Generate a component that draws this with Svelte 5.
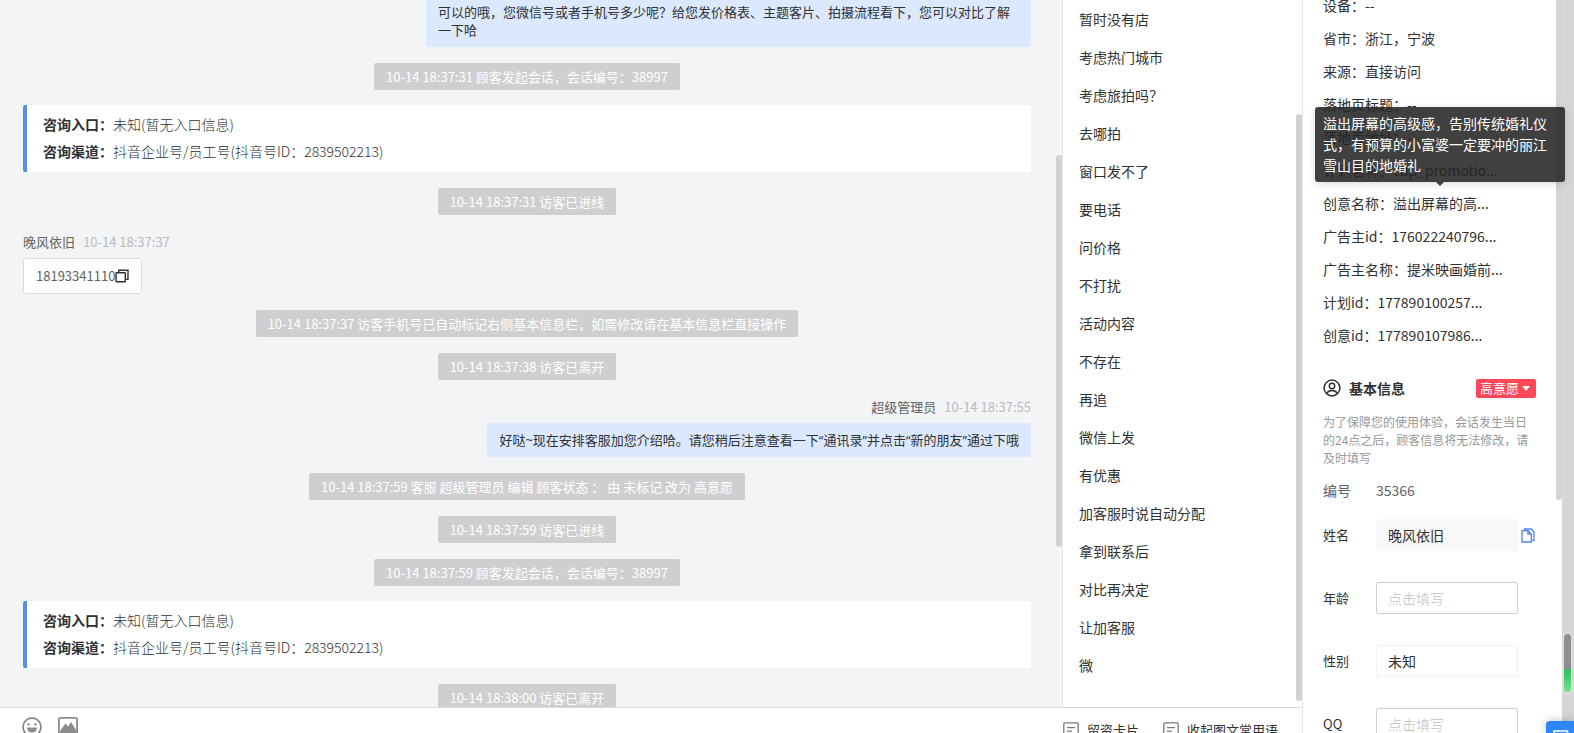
<script>
  const messages = [
    { kind: 'mine', text: '可以的哦，您微信号或者手机号多少呢？给您发价格表、主题客片、拍摄流程看下，您可以对比了解一下哈' },
    { kind: 'notice', text: '10-14 18:37:31 顾客发起会话，会话编号：38997' },
    { kind: 'card' },
    { kind: 'notice', text: '10-14 18:37:31 访客已进线' },
    { kind: 'guest', name: '晚风依旧', time: '10-14 18:37:37', text: '18193341110' },
    { kind: 'notice', text: '10-14 18:37:37 访客手机号已自动标记右侧基本信息栏，如需修改请在基本信息栏直接操作' },
    { kind: 'notice', text: '10-14 18:37:38 访客已离开' },
    { kind: 'mine', name: '超级管理员', time: '10-14 18:37:55', text: '好哒~现在安排客服加您介绍哈。请您稍后注意查看一下“通讯录”并点击“新的朋友”通过下哦' },
    { kind: 'notice', text: '10-14 18:37:59 客服 超级管理员 编辑 顾客状态 ： 由 未标记 改为 高意愿' },
    { kind: 'notice', text: '10-14 18:37:59 访客已进线' },
    { kind: 'notice', text: '10-14 18:37:59 顾客发起会话，会话编号：38997' },
    { kind: 'card' },
    { kind: 'notice', text: '10-14 18:38:00 访客已离开' }
  ];
  const phrases = ['暂时没有店', '考虑热门城市', '考虑旅拍吗？', '去哪拍', '窗口发不了', '要电话', '问价格', '不打扰', '活动内容', '不存在', '再追', '微信上发', '有优惠', '加客服时说自动分配', '拿到联系后', '对比再决定', '让加客服', '微'];
  const details = [
    ['设备', '--'],
    ['省市', '浙江，宁波'],
    ['来源', '直接访问'],
    ['落地页标题', '--'],
    ['落地页地址', '--'],
    ['计划名称', 'cdp_promotio...'],
    ['创意名称', '溢出屏幕的高...', '溢出屏幕的高级感，告别传统婚礼仪式，有预算的小富婆一定要冲的丽江雪山目的地婚礼'],
    ['广告主id', '176022240796...'],
    ['广告主名称', '提米映画婚前...'],
    ['计划id', '177890100257...'],
    ['创意id', '177890107986...']
  ];
  const fields = [
    { id: 'name', label: '姓名', value: '晚风依旧', look: 'filled', copy: true },
    { id: 'age', label: '年龄', value: '', look: 'outlined' },
    { id: 'gender', label: '性别', value: '未知', look: 'faint' },
    { id: 'qq', label: 'QQ', value: '', look: 'outlined' }
  ];
</script>

{#snippet noteIcon()}
  <svg width="16" height="16" viewBox="0 0 16 16" fill="none" stroke="#77797c" stroke-width="1.3">
    <rect x="0.8" y="0.8" width="14.4" height="14.4" rx="1.2" />
    <path d="M4 5.6h8M4 9.2h5" />
  </svg>
{/snippet}

<div class="app">
  <main class="chat">
    <div class="messages">
      {#each messages as m}
        {#if m.kind === 'notice'}
          <p class="notice">{m.text}</p>
        {:else if m.kind === 'card'}
          <dl class="card">
            <div><dt>咨询入口：</dt><dd>未知(暂无入口信息)</dd></div>
            <div><dt>咨询渠道：</dt><dd>抖音企业号/员工号(抖音号ID：2839502213)</dd></div>
          </dl>
        {:else}
          <article class={m.kind}>
            {#if m.name}
              <header><span>{m.name}</span><time>{m.time}</time></header>
            {/if}
            <div class="bubble">
              {m.text}{#if m.kind === 'guest'}<button class="icon" aria-label="复制">
                  <svg width="14" height="14" viewBox="0 0 14 14" fill="none" stroke="#303133" stroke-width="1.4">
                    <rect x="1" y="3.7" width="9.3" height="9" rx="0.5" />
                    <path d="M3.7 3.5V1.2H13v9.2h-2.6" />
                  </svg>
                </button>{/if}
            </div>
          </article>
        {/if}
      {/each}
    </div>
    <div class="track"><i class="thumb chat-thumb"></i></div>
  </main>

  <nav class="phrases">
    <ul>
      {#each phrases as p}<li><button>{p}</button></li>{/each}
    </ul>
    <div class="track"><i class="thumb phrase-thumb"></i></div>
  </nav>

  <footer class="toolbar">
    <div class="tools">
      <button class="icon" aria-label="表情">
        <svg width="20" height="20" viewBox="0 0 20 20">
          <circle cx="10" cy="10" r="9" fill="none" stroke="#8c8c8c" stroke-width="1.8" />
          <circle cx="6.6" cy="7.4" r="1.2" fill="#8c8c8c" /><circle cx="13.4" cy="7.4" r="1.2" fill="#8c8c8c" />
          <path d="M5 10.6h10a5 5 0 0 1-10 0z" fill="#8c8c8c" />
        </svg>
      </button>
      <button class="icon" aria-label="图片">
        <svg width="20" height="20" viewBox="0 0 20 20">
          <rect x="0.9" y="0.9" width="18.2" height="18.2" rx="1.8" fill="none" stroke="#8c8c8c" stroke-width="1.8" />
          <path d="M2 14l5.500-7.500 2.500 3 3-4.500 5 8v5H2z" fill="#8c8c8c" />
        </svg>
      </button>
    </div>
    <div class="actions">
      <button>{@render noteIcon()}留资卡片</button>
      <button>{@render noteIcon()}收起图文常用语</button>
    </div>
  </footer>

  <aside class="info">
    <div class="panel">
      <ul class="details">
        {#each details as [label, value, tip]}
          <li>
            {label}：{value}
            {#if tip}<div class="tooltip" role="tooltip">{tip}</div>{/if}
          </li>
        {/each}
      </ul>
      <section>
        <div class="heading">
          <svg width="18" height="18" viewBox="0 0 18 18" fill="none" stroke="#303133" stroke-width="1.5">
            <circle cx="9" cy="9" r="7.9" />
            <circle cx="9" cy="7" r="2.7" />
            <path d="M3.6 14.4c1.2-2.3 3-3 5.4-3s4.2.7 5.4 3" />
          </svg>
          <h2>基本信息</h2>
          <button class="tag">高意愿<i></i></button>
        </div>
        <p class="hint">为了保障您的使用体验，会话发生当日的24点之后，顾客信息将无法修改，请及时填写</p>
        <div class="serial"><span>编号</span><span>35366</span></div>
        <form>
          {#each fields as f}
            <div class="field">
              <label for={f.id}>{f.label}</label>
              <input id={f.id} class={f.look} value={f.value} placeholder="点击填写" />
              {#if f.copy}
                <button type="button" class="icon" aria-label="复制姓名">
                  <svg width="14" height="15" viewBox="0 0 14 15" fill="none" stroke="#4a86ee" stroke-width="1.3">
                    <path d="M1 2.7h6L10.3 6v8H1z" /><path d="M7 2.7V6h3.3" />
                    <path d="M3.5 2.500V1h6.700L13 3.800v8.500h-2.500" />
                  </svg>
                </button>
              {/if}
            </div>
          {/each}
        </form>
      </section>
    </div>
    <div class="inner-track"><i></i></div>
    <div class="outer-track"><i></i></div>
    <button class="float" aria-label="在线咨询">
      <svg width="16" height="14" viewBox="0 0 16 14" fill="none" stroke="#fff" stroke-width="1.6"><path d="M1 1h13.500v10H1z" /><path d="M4 5h7.500" /></svg>
    </button>
  </aside>
</div>

<style>
  :global(body) { margin: 0; }
  .app {
    display: grid;
    grid-template: minmax(0, 1fr) 26px / minmax(0, 1fr) 240px 271px;
    height: 100vh;
    overflow: hidden;
    background: #fff;
    color: #303133;
    font: 14px/20px "Noto Sans CJK SC", sans-serif;
  }
  ul, dl, dd, p, h2 { margin: 0; padding: 0; list-style: none; }
  button { padding: 0; border: 0; background: none; color: inherit; font: inherit; cursor: pointer; }
  .icon { display: inline-flex; flex: none; }

  .chat { display: flex; min-height: 0; background: #f3f4f6; overflow: hidden; }
  .messages {
    flex: 1;
    display: flex;
    flex-direction: column;
    align-items: center;
    gap: 16px;
    margin-top: -5px;
    padding: 0 25px 0 23px;
    font-size: 13px;
    line-height: 18px;
  }
  .messages > * { flex: none; }
  .track { flex: none; width: 6px; border-right: 1px solid #e6e6e6; background: #f6f6f6; }
  .thumb { display: block; border-radius: 3px; background: #d2d2d2; }
  .chat-thumb { margin-top: 155px; height: 392px; }
  .notice { padding: 5px 12px 4px; border-radius: 2px; background: #cfcfd1; color: #fff; }
  .card {
    align-self: stretch;
    box-sizing: border-box;
    margin-top: -1px;
    padding: 6px 16px 7px;
    border-left: 4px solid #5a8fe8;
    border-radius: 2px;
    background: #fff;
    font-size: 14px;
    line-height: 27px;
  }
  .card div { display: flex; }
  .card dt { font-weight: 700; }
  .card dd { font-weight: 300; }
  article { display: flex; flex-direction: column; gap: 7px; }
  .mine { align-self: flex-end; align-items: flex-end; max-width: 605px; }
  .guest { align-self: flex-start; align-items: flex-start; }
  header { display: flex; gap: 8px; margin-top: 2px; color: #606266; }
  time { color: #b9bbbf; }
  .bubble { display: flex; align-items: center; border-radius: 3px; }
  .mine .bubble { padding: 8px 12px; background: #dce8fd; font-family: "Open Sans", "Noto Sans CJK SC", sans-serif; }
  .guest .bubble { padding: 8px 12px; border: 1px solid #dcdcde; background: #fff; color: #606266; }

  .phrases { display: flex; min-height: 0; overflow: hidden; }
  .phrases ul { flex: 1; padding: 0 16px; }
  .phrases li { height: 38px; }
  .phrases li button { height: 38px; }
  .phrases .track { background: #fff; }
  .phrase-thumb { margin-top: 114px; height: 587px; }

  .toolbar {
    grid-column: 1 / 3;
    box-sizing: border-box;
    display: flex;
    justify-content: space-between;
    align-items: flex-start;
    padding: 9px 24px 0 22px;
    border-top: 1px solid #d9d9d9;
    border-right: 1px solid #e6e6e6;
    font-size: 13px;
    overflow: hidden;
  }
  .tools { display: flex; gap: 16px; }
  .actions { display: flex; gap: 24px; padding-top: 3px; }
  .actions button { display: flex; align-items: center; gap: 8px; }

  .info { grid-area: 1 / 3 / 3 / 4; position: relative; display: flex; min-height: 0; }
  .panel { flex: 1; min-width: 0; padding: 0 20px; }
  .details { margin-top: -11px; }
  .details li { position: relative; line-height: 33px; white-space: nowrap; }
  .tooltip {
    position: absolute;
    z-index: 2;
    left: -8px;
    bottom: 38px;
    box-sizing: border-box;
    width: 250px;
    padding: 6px 8px;
    border-radius: 3px;
    background: rgba(36, 36, 36, 0.87);
    box-shadow: 0 2px 8px rgba(0, 0, 0, 0.15);
    color: #fff;
    line-height: 21px;
    white-space: normal;
  }
  .tooltip::after {
    content: "";
    position: absolute;
    top: 100%;
    left: 50%;
    margin-left: -4px;
    border: 4px solid transparent;
    border-bottom: 0;
    border-top-color: #404040;
  }
  .heading { display: flex; align-items: center; margin-top: 26px; }
  .heading h2 { margin-left: 8px; font-size: 14px; font-weight: 700; line-height: 20px; }
  .tag {
    display: flex;
    align-items: center;
    gap: 3px;
    height: 19px;
    margin-left: auto;
    padding: 0 6px 0 4px;
    border-radius: 2px;
    background: #ff4757;
    color: #fff;
    font-size: 13px;
  }
  .tag i { border: 4px solid transparent; border-top: 5px solid #fff; border-bottom: 0; }
  .hint { margin-top: 15px; color: #96989b; font-size: 12px; line-height: 18px; }
  .serial { display: grid; grid-template-columns: 53px 1fr; margin-top: 13px; color: #606266; }
  form { display: grid; gap: 31px; margin-top: 19px; }
  .field { display: grid; grid-template-columns: 53px 142px 18px; align-items: center; }
  .field label { font-size: 13px; }
  .field .icon { padding-left: 3px; }
  .icon svg { flex: none; }
  .field input {
    box-sizing: border-box;
    width: 100%;
    height: 32px;
    padding: 0 11px;
    border: 1px solid #d0d0d0;
    border-radius: 2px;
    background: #fff;
    color: #303133;
    font: inherit;
    outline: 0;
  }
  .field input::placeholder { color: #bfc1c5; font-weight: 300; }
  .field .filled { border-color: #f8f8f8; background: #f8f8f8; }
  .field .faint { border-color: #f2f2f2; }
  .inner-track { flex: none; width: 6px; }
  .inner-track i { display: block; height: 500px; border-radius: 0 0 3px 3px; background: #d4d4d4; }
  .outer-track { flex: none; width: 12px; background: #d6d6d6; }
  .outer-track i {
    display: block;
    width: 7px;
    height: 58px;
    margin: 634px 0 0 2px;
    border-radius: 4px;
    background: linear-gradient(#8e8e8e 0 35px, #27bd5c 35px, #6fe788);
    box-shadow: 0 0 2px #fff;
  }
  .float {
    position: absolute;
    right: 0;
    bottom: 0;
    box-sizing: border-box;
    display: flex;
    width: 28px;
    height: 12px;
    padding: 9px 0 0 7px;
    border-radius: 4px 0 0 0;
    background: #2d86fb;
    box-shadow: 0 0 10px rgba(0, 0, 0, 0.25);
    overflow: hidden;
  }
</style>
